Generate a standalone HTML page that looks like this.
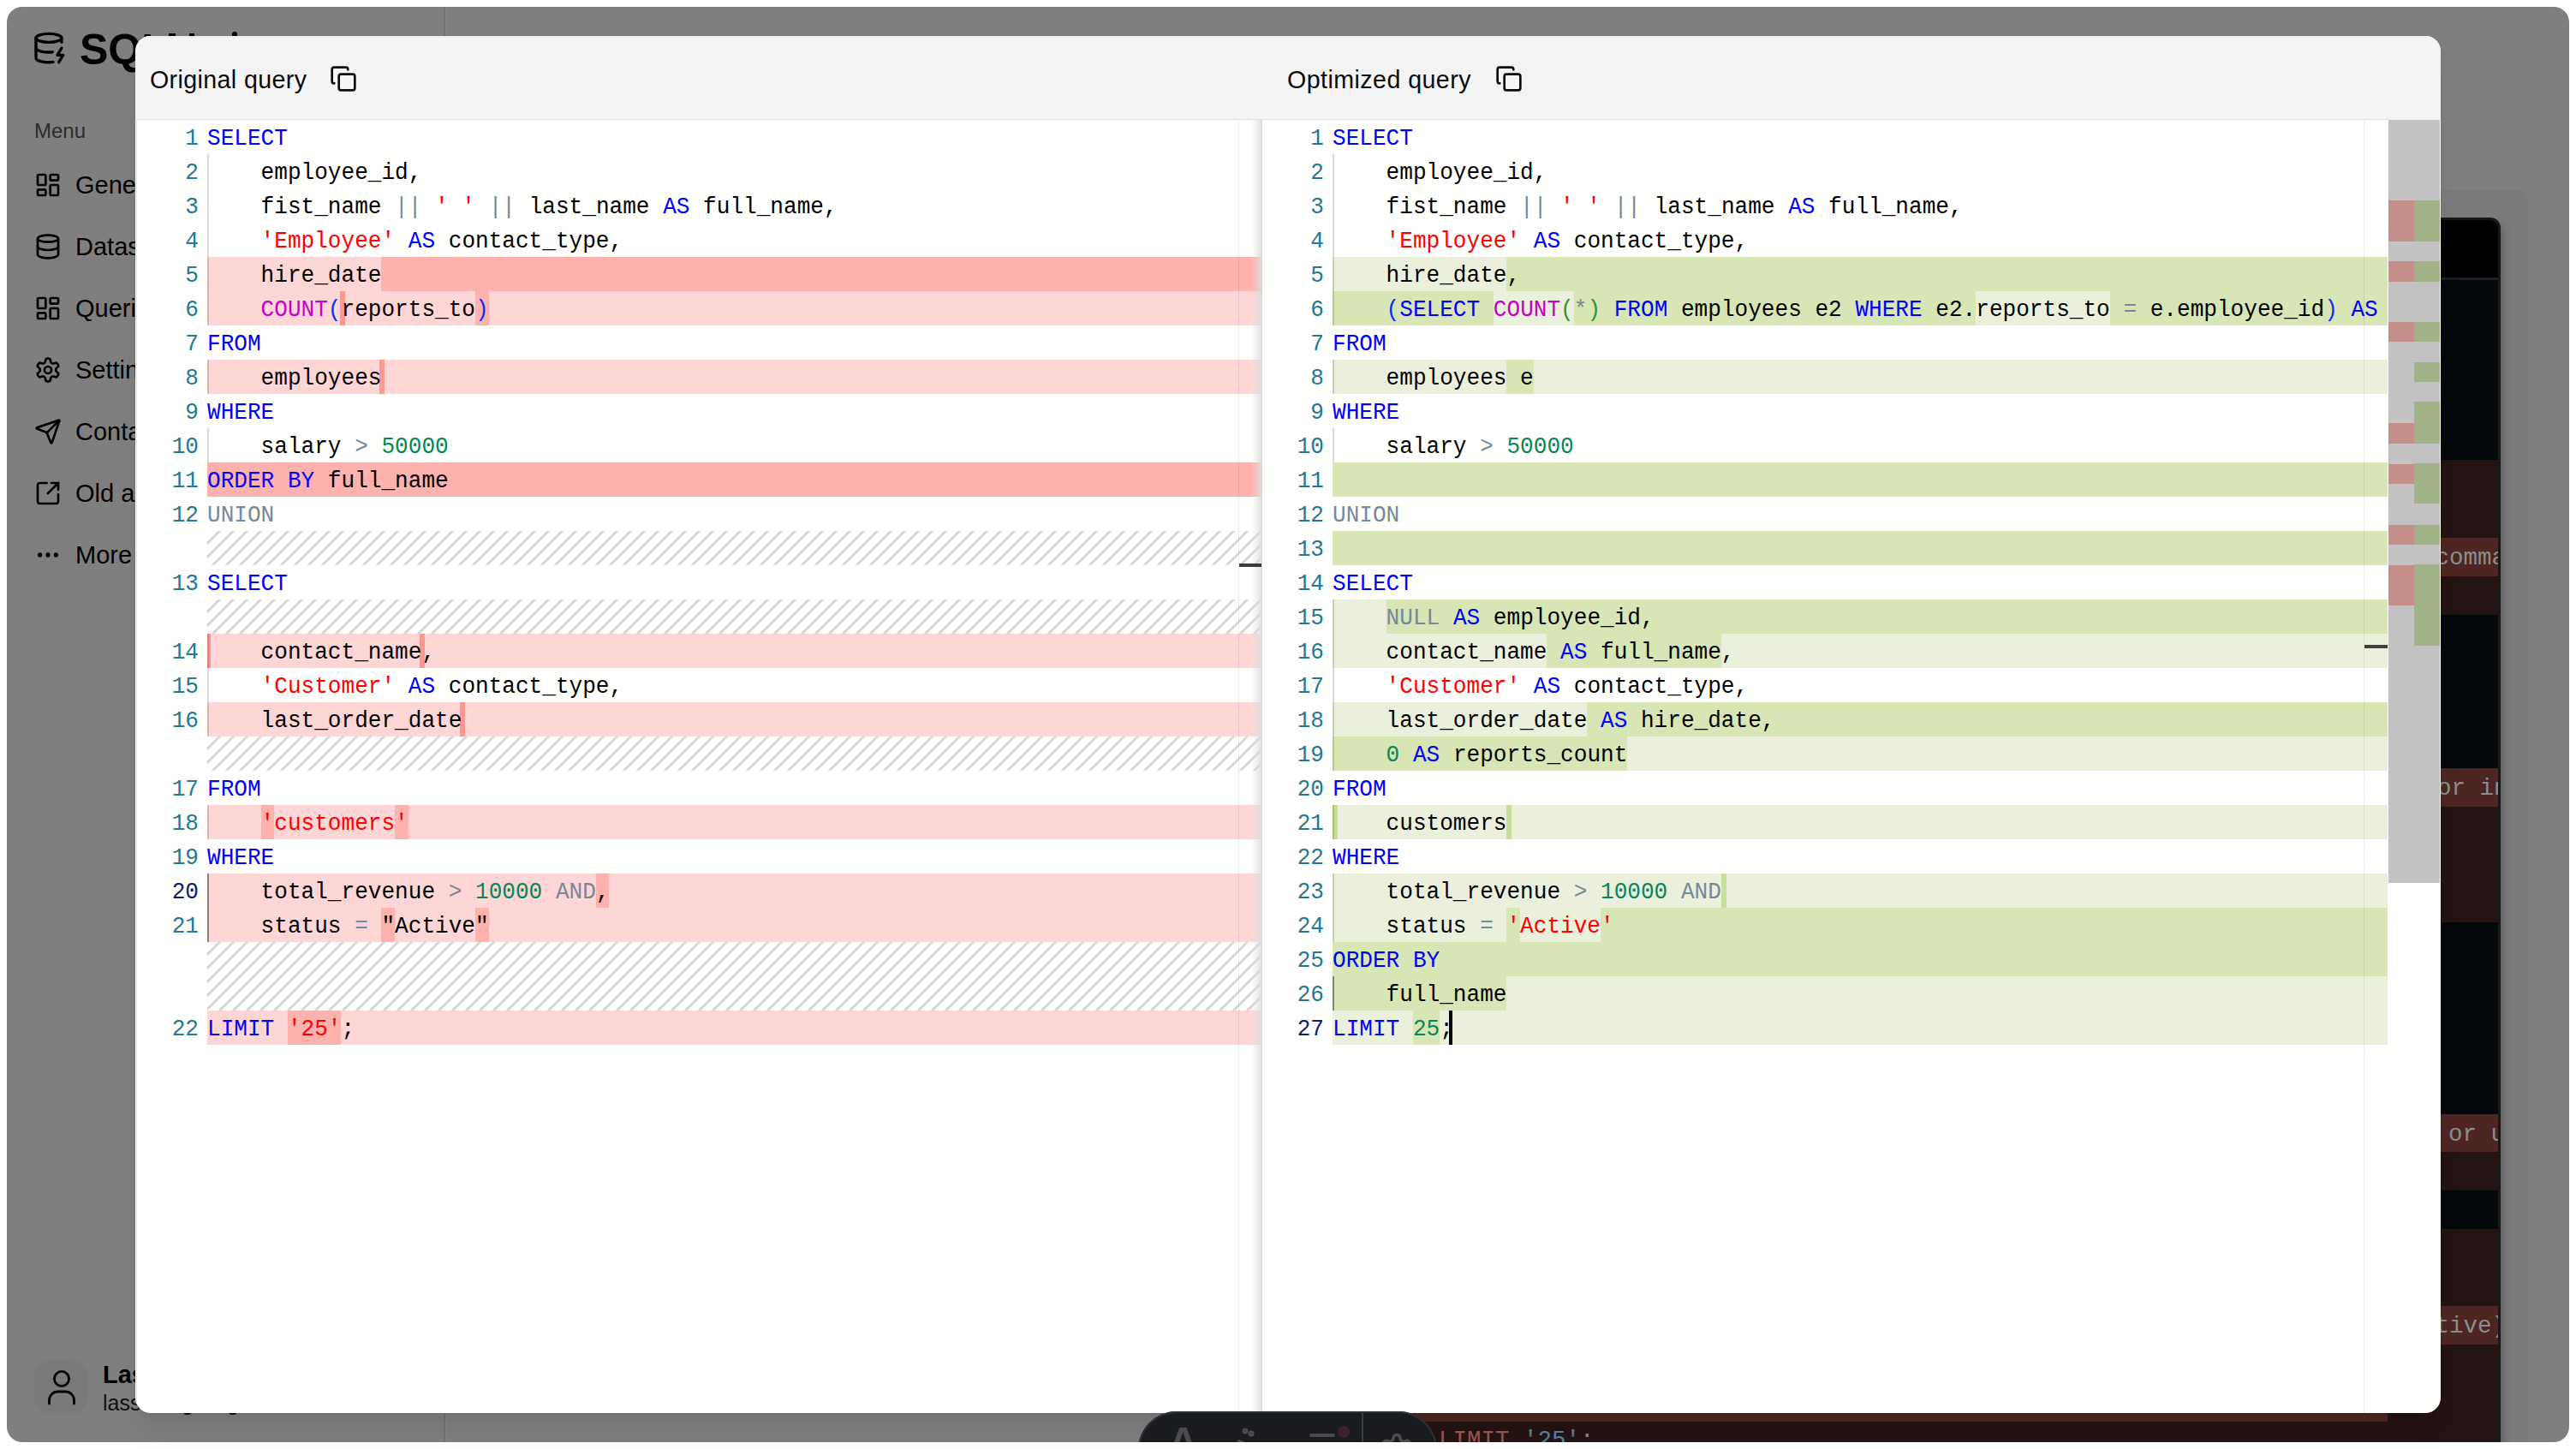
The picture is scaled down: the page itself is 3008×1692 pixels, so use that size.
<!DOCTYPE html>
<html><head><meta charset="utf-8">
<style>
html,body{margin:0;padding:0}
body{width:3008px;height:1692px;position:relative;overflow:hidden;background:#ffffff;font-family:"Liberation Sans",sans-serif}
.abs{position:absolute}
#win{position:absolute;left:8px;top:8px;width:2992px;height:1676px;border-radius:18px;overflow:hidden;background:#7f7f7f}
#modal{position:absolute;left:158px;top:42px;width:2692px;height:1608px;border-radius:18px;overflow:hidden;background:#fffffe;box-shadow:0 0 0 1px rgba(0,0,0,0.03)}
.lbg{position:absolute;height:40px}
.hatch{position:absolute;height:40px;background-image:linear-gradient(-45deg,#d6d6d6 12.5%,transparent 12.5%,transparent 50%,#d6d6d6 50%,#d6d6d6 62.5%,transparent 62.5%,transparent 100%);background-size:16px 16px}
.guide{position:absolute;width:2px;height:40px;background:rgba(0,0,0,0.15)}
.ln{position:absolute;margin-top:2px;transform:scaleY(1.08);transform-origin:0 26.94px;width:80px;height:40px;line-height:40px;text-align:right;font-family:"Liberation Mono",monospace;font-size:26.08px;white-space:pre}
.code{position:absolute;margin-top:2px;transform:scaleY(1.05);transform-origin:0 26.94px;height:40px;line-height:40px;font-family:"Liberation Mono",monospace;font-size:26.08px;white-space:pre;color:#000}
.dk{font-family:"Liberation Mono",monospace;font-size:27.5px;line-height:36px;white-space:pre}
.side{position:absolute;font-size:27px;color:#000;white-space:pre}
</style></head>
<body>
<div id="win">
  <!-- sidebar border -->
  <div class="abs" style="left:510px;top:0;width:2px;height:1676px;background:#727272"></div><div class="abs" style="left:512px;top:0;width:1px;height:1676px;background:#848484"></div>
  <!-- right panel -->
  <div class="abs" style="left:2700px;top:214px;width:244px;height:1500px;border-radius:0 10px 0 0;background:#7b7b7b"></div>
  <!-- dark editor (background) -->
  <div class="abs" style="left:1400px;top:246px;width:1512px;height:1500px;border-radius:12px;background:#16191c;box-shadow:8px 6px 10px -4px rgba(0,0,0,0.22)"></div>
  <div class="abs" style="left:1403px;top:249px;width:1506px;height:1500px;border-radius:10px 10px 0 0;background:#05080b;overflow:hidden">
    <div class="abs" style="left:0;top:0;width:1506px;height:67px;background:#000"></div>
    <div class="abs" style="left:0;top:67px;width:1506px;height:3px;background:#1c1f23"></div>
    <div class="abs" style="left:0px;top:280px;width:1506px;height:91px;background:#231312"></div>
    <div class="abs" style="left:0px;top:371px;width:1506px;height:45px;background:#4d2623"></div>
    <div class="abs" style="left:0px;top:416px;width:1506px;height:45px;background:#231312"></div>
    <div class="abs" style="left:0px;top:640px;width:1506px;height:45px;background:#4d2623"></div>
    <div class="abs" style="left:0px;top:685px;width:1506px;height:135px;background:#231312"></div>
    <div class="abs" style="left:0px;top:1044px;width:1506px;height:44px;background:#4d2623"></div>
    <div class="abs" style="left:0px;top:1088px;width:1506px;height:45px;background:#231312"></div>
    <div class="abs" style="left:0px;top:1178px;width:1506px;height:90px;background:#231312"></div>
    <div class="abs" style="left:0px;top:1268px;width:1506px;height:45px;background:#4d2623"></div>
    <div class="abs" style="left:0px;top:1313px;width:1506px;height:130px;background:#231312"></div>
    <div class="abs" style="left:0px;top:1358px;width:1377px;height:45px;background:#4d2623"></div>
    <div class="abs dk" style="left:1432.5px;top:377px;color:#8a8d8d">comma</div>
    <div class="abs dk" style="left:1435px;top:646px;color:#8a8d8d">or in</div>
    <div class="abs dk" style="left:1431.5px;top:1050px;color:#8a8d8d"> or u</div>
    <div class="abs dk" style="left:1432.5px;top:1274px;color:#8a8d8d">tive)</div>
    <div class="abs dk" style="left:269px;top:1407px;color:#a0524a">LIMIT <span style="color:#5a7fa6">'25'</span><span style="color:#8a8d8d">;</span></div>
  </div>
</div>

<!-- sidebar content (absolute page coords) -->
<svg class="abs" style="left:36.5px;top:35.5px" width="40" height="40" viewBox="0 0 24 24" fill="none" stroke="#000" stroke-width="2" stroke-linecap="round" stroke-linejoin="round"><ellipse cx="12" cy="5" rx="9" ry="3"/><path d="M3 5V19A9 3 0 0 0 15 21.84"/><path d="M21 5V8"/><path d="M21 12L18 17H22L19 22"/><path d="M3 12A9 3 0 0 0 14.59 14.87"/></svg>
<div class="side" style="left:93px;top:30px;font-size:50px;font-weight:bold;line-height:56px">SQL</div>
<div class="abs" style="left:197px;top:39px;width:8px;height:3px;background:#000"></div>
<div class="abs" style="left:221px;top:39px;width:6px;height:3px;background:#000"></div>
<div class="abs" style="left:271px;top:37px;width:6px;height:5px;border-radius:3px 3px 0 0;background:#000"></div>

<div class="side" style="left:40px;top:137.5px;font-size:24px;color:#2b2b2b;line-height:30px">Menu</div>

<svg class="abs" style="left:40px;top:200px" width="32" height="32" viewBox="0 0 24 24" fill="none" stroke="#000" stroke-width="2" stroke-linecap="round" stroke-linejoin="round"><rect width="7" height="9" x="3" y="3" rx="1"/><rect width="7" height="5" x="14" y="3" rx="1"/><rect width="7" height="9" x="14" y="12" rx="1"/><rect width="7" height="5" x="3" y="16" rx="1"/></svg>
<div class="side" style="left:88px;top:197.75px;font-size:29px;line-height:36px">General</div>
<svg class="abs" style="left:40px;top:272px" width="32" height="32" viewBox="0 0 24 24" fill="none" stroke="#000" stroke-width="2" stroke-linecap="round" stroke-linejoin="round"><ellipse cx="12" cy="5" rx="9" ry="3"/><path d="M3 5V19A9 3 0 0 0 21 19V5"/><path d="M3 12A9 3 0 0 0 21 12"/></svg>
<div class="side" style="left:88px;top:269.75px;font-size:29px;line-height:36px">Datasets</div>
<svg class="abs" style="left:40px;top:344px" width="32" height="32" viewBox="0 0 24 24" fill="none" stroke="#000" stroke-width="2" stroke-linecap="round" stroke-linejoin="round"><rect width="7" height="9" x="3" y="3" rx="1"/><rect width="7" height="5" x="14" y="3" rx="1"/><rect width="7" height="9" x="14" y="12" rx="1"/><rect width="7" height="5" x="3" y="16" rx="1"/></svg>
<div class="side" style="left:88px;top:341.75px;font-size:29px;line-height:36px">Queries</div>
<svg class="abs" style="left:40px;top:416px" width="32" height="32" viewBox="0 0 24 24" fill="none" stroke="#000" stroke-width="2" stroke-linecap="round" stroke-linejoin="round"><path d="M12.22 2h-.44a2 2 0 0 0-2 2v.18a2 2 0 0 1-1 1.73l-.43.25a2 2 0 0 1-2 0l-.15-.08a2 2 0 0 0-2.73.73l-.22.38a2 2 0 0 0 .73 2.73l.15.1a2 2 0 0 1 1 1.72v.51a2 2 0 0 1-1 1.74l-.15.09a2 2 0 0 0-.73 2.73l.22.38a2 2 0 0 0 2.73.73l.15-.08a2 2 0 0 1 2 0l.43.25a2 2 0 0 1 1 1.73V20a2 2 0 0 0 2 2h.44a2 2 0 0 0 2-2v-.18a2 2 0 0 1 1-1.73l.43-.25a2 2 0 0 1 2 0l.15.08a2 2 0 0 0 2.73-.73l.22-.39a2 2 0 0 0-.73-2.73l-.15-.08a2 2 0 0 1-1-1.74v-.5a2 2 0 0 1 1-1.74l.15-.09a2 2 0 0 0 .73-2.73l-.22-.38a2 2 0 0 0-2.73-.73l-.15.08a2 2 0 0 1-2 0l-.43-.25a2 2 0 0 1-1-1.73V4a2 2 0 0 0-2-2z"/><circle cx="12" cy="12" r="3"/></svg>
<div class="side" style="left:88px;top:413.75px;font-size:29px;line-height:36px">Settings</div>
<svg class="abs" style="left:40px;top:488px" width="32" height="32" viewBox="0 0 24 24" fill="none" stroke="#000" stroke-width="2" stroke-linecap="round" stroke-linejoin="round"><path d="M14.536 21.686a.5.5 0 0 0 .937-.024l6.5-19a.496.496 0 0 0-.635-.635l-19 6.5a.5.5 0 0 0-.024.937l7.93 3.18a2 2 0 0 1 1.112 1.11z"/><path d="m21.854 2.147-10.94 10.939"/></svg>
<div class="side" style="left:88px;top:485.75px;font-size:29px;line-height:36px">Contact</div>
<svg class="abs" style="left:40px;top:560px" width="32" height="32" viewBox="0 0 24 24" fill="none" stroke="#000" stroke-width="2" stroke-linecap="round" stroke-linejoin="round"><path d="M21 13v6a2 2 0 0 1-2 2H5a2 2 0 0 1-2-2V5a2 2 0 0 1 2-2h6"/><path d="m21 3-9 9"/><path d="M15 3h6v6"/></svg>
<div class="side" style="left:88px;top:557.75px;font-size:29px;line-height:36px">Old app</div>
<svg class="abs" style="left:40px;top:632px" width="32" height="32" viewBox="0 0 24 24" fill="none" stroke="#000" stroke-width="2" stroke-linecap="round" stroke-linejoin="round"><circle cx="12" cy="12" r="1"/><circle cx="19" cy="12" r="1"/><circle cx="5" cy="12" r="1"/></svg>
<div class="side" style="left:88px;top:629.75px;font-size:29px;line-height:36px">More</div>
<div class="abs" style="left:40px;top:1588px;width:63px;height:63px;border-radius:20px;background:#7a7a7a"></div>
<svg class="abs" style="left:40px;top:1588px" width="64" height="64" viewBox="0 0 64 64" fill="none" stroke="#000" stroke-width="2.8" stroke-linecap="round"><circle cx="32" cy="22" r="8.6"/><path d="M17.5 51V47a10 10 0 0 1 10-10h9a10 10 0 0 1 10 10V51"/></svg>
<div class="side" style="left:120px;top:1587.2px;font-size:29px;font-weight:bold;line-height:36px">Lasse</div>
<div class="side" style="left:120px;top:1622px;font-size:25px;line-height:32px;color:#111">lasse</div><div class="side" style="left:212px;top:1622px;font-size:25px;line-height:32px;color:#111">g</div><div class="side" style="left:265px;top:1622px;font-size:25px;line-height:32px;color:#111">g</div>

<!-- modal shadow -->
<div class="abs" style="left:158px;top:42px;width:2692px;height:1608px;border-radius:18px;box-shadow:0 24px 34px -8px rgba(0,0,0,0.09),0 8px 12px -8px rgba(0,0,0,0.08)"></div>
<!-- modal -->
<div id="modal">
 <div class="abs" style="left:-158px;top:-42px;width:3008px;height:1692px">
  <div class="abs" style="left:158px;top:42px;width:2692px;height:98px;background:#f4f4f5"></div>
  <div class="abs" style="left:158px;top:42px;width:2692px;height:2px;background:#ededed"></div>
<div class="abs" style="left:175px;top:74.5px;font-size:28.6px;letter-spacing:0.38px;line-height:36px;white-space:pre;color:#0a0a0a">Original query</div>
<div class="abs" style="left:385px;top:76px;width:32px;height:32px"><svg width="32" height="32" viewBox="0 0 24 24" fill="none" stroke="#0a0a0a" stroke-width="2" stroke-linecap="round" stroke-linejoin="round"><rect width="14" height="14" x="8" y="8" rx="2" ry="2"/><path d="M4 16c-1.1 0-2-.9-2-2V4c0-1.1.9-2 2-2h10c1.1 0 2 .9 2 2"/></svg></div>
<div class="abs" style="left:1503px;top:74.5px;font-size:28.6px;letter-spacing:0.45px;line-height:36px;white-space:pre;color:#0a0a0a">Optimized query</div>
<div class="abs" style="left:1746px;top:76px;width:32px;height:32px"><svg width="32" height="32" viewBox="0 0 24 24" fill="none" stroke="#0a0a0a" stroke-width="2" stroke-linecap="round" stroke-linejoin="round"><rect width="14" height="14" x="8" y="8" rx="2" ry="2"/><path d="M4 16c-1.1 0-2-.9-2-2V4c0-1.1.9-2 2-2h10c1.1 0 2 .9 2 2"/></svg></div>

<!-- editor borders -->
<div class="abs" style="left:159px;top:139px;width:2630px;height:1px;background:#d5e5f5"></div>
<div class="abs" style="left:159px;top:139px;width:1px;height:1510px;background:#d5e5f5"></div>
<div class="abs" style="left:1473px;top:140px;width:1px;height:1510px;background:#c9dcf3"></div>

<!-- left editor -->
<div class="abs" style="left:160px;top:140px;width:1313px;height:1510px;overflow:hidden">
 <div class="abs" style="left:-160px;top:-140px;width:1474px;height:1700px">
<div class="ln" style="left:152px;top:140px;color:#237893">1</div>
<div class="code" style="left:242px;top:140px"><span style="color:#0000ff">SELECT</span></div>
<div class="guide" style="left:242px;top:180px"></div>
<div class="ln" style="left:152px;top:180px;color:#237893">2</div>
<div class="code" style="left:242px;top:180px">    employee_id,</div>
<div class="guide" style="left:242px;top:220px"></div>
<div class="ln" style="left:152px;top:220px;color:#237893">3</div>
<div class="code" style="left:242px;top:220px">    fist_name <span style="color:#778899">||</span> <span style="color:#ff0000">&#x27; &#x27;</span> <span style="color:#778899">||</span> last_name <span style="color:#0000ff">AS</span> full_name,</div>
<div class="guide" style="left:242px;top:260px"></div>
<div class="ln" style="left:152px;top:260px;color:#237893">4</div>
<div class="code" style="left:242px;top:260px">    <span style="color:#ff0000">&#x27;Employee&#x27;</span> <span style="color:#0000ff">AS</span> contact_type,</div>
<div class="lbg" style="left:242px;top:300px;width:1232px;background:#fdd6d5"></div>
<div class="lbg" style="left:445.44px;top:300px;width:1028.56px;background:#fdb2ae"></div>
<div class="guide" style="left:242px;top:300px"></div>
<div class="ln" style="left:152px;top:300px;color:#237893">5</div>
<div class="code" style="left:242px;top:300px">    hire_date</div>
<div class="lbg" style="left:242px;top:340px;width:1232px;background:#fdd6d5"></div>
<div class="lbg" style="left:396.50px;top:340px;width:6.00px;background:#fd978f"></div>
<div class="lbg" style="left:554.99px;top:340px;width:15.65px;background:#fdb2ae"></div>
<div class="guide" style="left:242px;top:340px"></div>
<div class="ln" style="left:152px;top:340px;color:#237893">6</div>
<div class="code" style="left:242px;top:340px">    <span style="color:#c700c7">COUNT</span><span style="color:#0431fa">(</span>reports_to<span style="color:#0431fa">)</span></div>
<div class="ln" style="left:152px;top:380px;color:#237893">7</div>
<div class="code" style="left:242px;top:380px"><span style="color:#0000ff">FROM</span></div>
<div class="lbg" style="left:242px;top:420px;width:1232px;background:#fdd6d5"></div>
<div class="lbg" style="left:443.44px;top:420px;width:6.00px;background:#fd978f"></div>
<div class="guide" style="left:242px;top:420px"></div>
<div class="ln" style="left:152px;top:420px;color:#237893">8</div>
<div class="code" style="left:242px;top:420px">    employees</div>
<div class="ln" style="left:152px;top:460px;color:#237893">9</div>
<div class="code" style="left:242px;top:460px"><span style="color:#0000ff">WHERE</span></div>
<div class="guide" style="left:242px;top:500px"></div>
<div class="ln" style="left:152px;top:500px;color:#237893">10</div>
<div class="code" style="left:242px;top:500px">    salary <span style="color:#778899">&gt;</span> <span style="color:#098658">50000</span></div>
<div class="lbg" style="left:242px;top:540px;width:1232px;background:#fdd6d5"></div>
<div class="lbg" style="left:242.00px;top:540px;width:1232.00px;background:#fdb2ae"></div>
<div class="ln" style="left:152px;top:540px;color:#237893">11</div>
<div class="code" style="left:242px;top:540px"><span style="color:#0000ff">ORDER</span> <span style="color:#0000ff">BY</span> full_name</div>
<div class="ln" style="left:152px;top:580px;color:#237893">12</div>
<div class="code" style="left:242px;top:580px"><span style="color:#778899">UNION</span></div>
<div class="hatch" style="left:242px;top:620px;width:1232px;height:40px"></div>
<div class="ln" style="left:152px;top:660px;color:#237893">13</div>
<div class="code" style="left:242px;top:660px"><span style="color:#0000ff">SELECT</span></div>
<div class="hatch" style="left:242px;top:700px;width:1232px;height:40px"></div>
<div class="lbg" style="left:242px;top:740px;width:1232px;background:#fdd6d5"></div>
<div class="lbg" style="left:242.00px;top:740px;width:4.00px;background:#fd978f"></div>
<div class="lbg" style="left:490.39px;top:740px;width:6.00px;background:#fd978f"></div>
<div class="guide" style="left:242px;top:740px"></div>
<div class="ln" style="left:152px;top:740px;color:#237893">14</div>
<div class="code" style="left:242px;top:740px">    contact_name,</div>
<div class="guide" style="left:242px;top:780px"></div>
<div class="ln" style="left:152px;top:780px;color:#237893">15</div>
<div class="code" style="left:242px;top:780px">    <span style="color:#ff0000">&#x27;Customer&#x27;</span> <span style="color:#0000ff">AS</span> contact_type,</div>
<div class="lbg" style="left:242px;top:820px;width:1232px;background:#fdd6d5"></div>
<div class="lbg" style="left:537.34px;top:820px;width:6.00px;background:#fd978f"></div>
<div class="guide" style="left:242px;top:820px"></div>
<div class="ln" style="left:152px;top:820px;color:#237893">16</div>
<div class="code" style="left:242px;top:820px">    last_order_date</div>
<div class="hatch" style="left:242px;top:860px;width:1232px;height:40px"></div>
<div class="ln" style="left:152px;top:900px;color:#237893">17</div>
<div class="code" style="left:242px;top:900px"><span style="color:#0000ff">FROM</span></div>
<div class="lbg" style="left:242px;top:940px;width:1232px;background:#fdd6d5"></div>
<div class="lbg" style="left:304.60px;top:940px;width:15.65px;background:#fdb2ae"></div>
<div class="lbg" style="left:461.09px;top:940px;width:15.65px;background:#fdb2ae"></div>
<div class="guide" style="left:242px;top:940px"></div>
<div class="ln" style="left:152px;top:940px;color:#237893">18</div>
<div class="code" style="left:242px;top:940px">    <span style="color:#ff0000">&#x27;customers&#x27;</span></div>
<div class="ln" style="left:152px;top:980px;color:#237893">19</div>
<div class="code" style="left:242px;top:980px"><span style="color:#0000ff">WHERE</span></div>
<div class="lbg" style="left:242px;top:1020px;width:1232px;background:#fdd6d5"></div>
<div class="lbg" style="left:695.84px;top:1020px;width:15.65px;background:#fdb2ae"></div>
<div class="guide" style="left:242px;top:1020px;background:rgba(0,0,0,0.42)"></div>
<div class="ln" style="left:152px;top:1020px;color:#0b216f">20</div>
<div class="code" style="left:242px;top:1020px">    total_revenue <span style="color:#778899">&gt;</span> <span style="color:#098658">10000</span> <span style="color:#778899">AND</span>,</div>
<div class="lbg" style="left:242px;top:1060px;width:1232px;background:#fdd6d5"></div>
<div class="lbg" style="left:445.44px;top:1060px;width:15.65px;background:#fdb2ae"></div>
<div class="lbg" style="left:554.99px;top:1060px;width:15.65px;background:#fdb2ae"></div>
<div class="guide" style="left:242px;top:1060px;background:rgba(0,0,0,0.42)"></div>
<div class="ln" style="left:152px;top:1060px;color:#237893">21</div>
<div class="code" style="left:242px;top:1060px">    status <span style="color:#778899">=</span> &quot;Active&quot;</div>
<div class="hatch" style="left:242px;top:1100px;width:1232px;height:80px"></div>
<div class="lbg" style="left:242px;top:1180px;width:1232px;background:#fdd6d5"></div>
<div class="lbg" style="left:335.90px;top:1180px;width:62.60px;background:#fdb2ae"></div>
<div class="ln" style="left:152px;top:1180px;color:#237893">22</div>
<div class="code" style="left:242px;top:1180px"><span style="color:#0000ff">LIMIT</span> <span style="color:#ff0000">&#x27;25&#x27;</span>;</div>
 </div>
</div>
<div class="abs" style="left:1446px;top:140px;width:1px;height:1510px;background:rgba(0,0,0,0.07)"></div>
<div class="abs" style="left:1461px;top:140px;width:12px;height:1510px;background:linear-gradient(to right,rgba(221,221,221,0),rgba(221,221,221,0.85))"></div>
<div class="abs" style="left:1447px;top:658px;width:26px;height:4px;background:#3c3c3c"></div>

<!-- right editor -->
<div class="abs" style="left:1474px;top:140px;width:1314px;height:1510px;overflow:hidden">
 <div class="abs" style="left:-1474px;top:-140px;width:2788px;height:1700px">
<div class="ln" style="left:1466px;top:140px;color:#237893">1</div>
<div class="code" style="left:1556px;top:140px"><span style="color:#0000ff">SELECT</span></div>
<div class="guide" style="left:1556px;top:180px"></div>
<div class="ln" style="left:1466px;top:180px;color:#237893">2</div>
<div class="code" style="left:1556px;top:180px">    employee_id,</div>
<div class="guide" style="left:1556px;top:220px"></div>
<div class="ln" style="left:1466px;top:220px;color:#237893">3</div>
<div class="code" style="left:1556px;top:220px">    fist_name <span style="color:#778899">||</span> <span style="color:#ff0000">&#x27; &#x27;</span> <span style="color:#778899">||</span> last_name <span style="color:#0000ff">AS</span> full_name,</div>
<div class="guide" style="left:1556px;top:260px"></div>
<div class="ln" style="left:1466px;top:260px;color:#237893">4</div>
<div class="code" style="left:1556px;top:260px">    <span style="color:#ff0000">&#x27;Employee&#x27;</span> <span style="color:#0000ff">AS</span> contact_type,</div>
<div class="lbg" style="left:1556px;top:300px;width:1232px;background:#eaf0dc"></div>
<div class="lbg" style="left:1759.44px;top:300px;width:1028.56px;background:#d8e5b5"></div>
<div class="guide" style="left:1556px;top:300px"></div>
<div class="ln" style="left:1466px;top:300px;color:#237893">5</div>
<div class="code" style="left:1556px;top:300px">    hire_date,</div>
<div class="lbg" style="left:1556px;top:340px;width:1232px;background:#eaf0dc"></div>
<div class="lbg" style="left:1556.00px;top:340px;width:187.80px;background:#d8e5b5"></div>
<div class="lbg" style="left:1837.69px;top:340px;width:469.49px;background:#d8e5b5"></div>
<div class="lbg" style="left:2463.68px;top:340px;width:324.32px;background:#d8e5b5"></div>
<div class="guide" style="left:1556px;top:340px"></div>
<div class="ln" style="left:1466px;top:340px;color:#237893">6</div>
<div class="code" style="left:1556px;top:340px">    <span style="color:#0431fa">(</span><span style="color:#0000ff">SELECT</span> <span style="color:#c700c7">COUNT</span><span style="color:#319331">(</span><span style="color:#778899">*</span><span style="color:#319331">)</span> <span style="color:#0000ff">FROM</span> employees e2 <span style="color:#0000ff">WHERE</span> e2.reports_to <span style="color:#778899">=</span> e.employee_id<span style="color:#0431fa">)</span> <span style="color:#0000ff">AS</span> reports_count,</div>
<div class="ln" style="left:1466px;top:380px;color:#237893">7</div>
<div class="code" style="left:1556px;top:380px"><span style="color:#0000ff">FROM</span></div>
<div class="lbg" style="left:1556px;top:420px;width:1232px;background:#eaf0dc"></div>
<div class="lbg" style="left:1759.44px;top:420px;width:31.30px;background:#d8e5b5"></div>
<div class="guide" style="left:1556px;top:420px"></div>
<div class="ln" style="left:1466px;top:420px;color:#237893">8</div>
<div class="code" style="left:1556px;top:420px">    employees e</div>
<div class="ln" style="left:1466px;top:460px;color:#237893">9</div>
<div class="code" style="left:1556px;top:460px"><span style="color:#0000ff">WHERE</span></div>
<div class="guide" style="left:1556px;top:500px"></div>
<div class="ln" style="left:1466px;top:500px;color:#237893">10</div>
<div class="code" style="left:1556px;top:500px">    salary <span style="color:#778899">&gt;</span> <span style="color:#098658">50000</span></div>
<div class="lbg" style="left:1556px;top:540px;width:1232px;background:#eaf0dc"></div>
<div class="lbg" style="left:1556.00px;top:540px;width:1232.00px;background:#d8e5b5"></div>
<div class="ln" style="left:1466px;top:540px;color:#237893">11</div>
<div class="code" style="left:1556px;top:540px"></div>
<div class="ln" style="left:1466px;top:580px;color:#237893">12</div>
<div class="code" style="left:1556px;top:580px"><span style="color:#778899">UNION</span></div>
<div class="lbg" style="left:1556px;top:620px;width:1232px;background:#eaf0dc"></div>
<div class="lbg" style="left:1556.00px;top:620px;width:1232.00px;background:#d8e5b5"></div>
<div class="ln" style="left:1466px;top:620px;color:#237893">13</div>
<div class="code" style="left:1556px;top:620px"></div>
<div class="ln" style="left:1466px;top:660px;color:#237893">14</div>
<div class="code" style="left:1556px;top:660px"><span style="color:#0000ff">SELECT</span></div>
<div class="lbg" style="left:1556px;top:700px;width:1232px;background:#eaf0dc"></div>
<div class="lbg" style="left:1618.60px;top:700px;width:1169.40px;background:#d8e5b5"></div>
<div class="guide" style="left:1556px;top:700px"></div>
<div class="ln" style="left:1466px;top:700px;color:#237893">15</div>
<div class="code" style="left:1556px;top:700px">    <span style="color:#778899">NULL</span> <span style="color:#0000ff">AS</span> employee_id,</div>
<div class="lbg" style="left:1556px;top:740px;width:1232px;background:#eaf0dc"></div>
<div class="lbg" style="left:1806.39px;top:740px;width:203.44px;background:#d8e5b5"></div>
<div class="guide" style="left:1556px;top:740px"></div>
<div class="ln" style="left:1466px;top:740px;color:#237893">16</div>
<div class="code" style="left:1556px;top:740px">    contact_name <span style="color:#0000ff">AS</span> full_name,</div>
<div class="guide" style="left:1556px;top:780px"></div>
<div class="ln" style="left:1466px;top:780px;color:#237893">17</div>
<div class="code" style="left:1556px;top:780px">    <span style="color:#ff0000">&#x27;Customer&#x27;</span> <span style="color:#0000ff">AS</span> contact_type,</div>
<div class="lbg" style="left:1556px;top:820px;width:1232px;background:#eaf0dc"></div>
<div class="lbg" style="left:1853.34px;top:820px;width:934.66px;background:#d8e5b5"></div>
<div class="guide" style="left:1556px;top:820px"></div>
<div class="ln" style="left:1466px;top:820px;color:#237893">18</div>
<div class="code" style="left:1556px;top:820px">    last_order_date <span style="color:#0000ff">AS</span> hire_date,</div>
<div class="lbg" style="left:1556px;top:860px;width:1232px;background:#eaf0dc"></div>
<div class="lbg" style="left:1556.00px;top:860px;width:344.29px;background:#d8e5b5"></div>
<div class="guide" style="left:1556px;top:860px"></div>
<div class="ln" style="left:1466px;top:860px;color:#237893">19</div>
<div class="code" style="left:1556px;top:860px">    <span style="color:#098658">0</span> <span style="color:#0000ff">AS</span> reports_count</div>
<div class="ln" style="left:1466px;top:900px;color:#237893">20</div>
<div class="code" style="left:1556px;top:900px"><span style="color:#0000ff">FROM</span></div>
<div class="lbg" style="left:1556px;top:940px;width:1232px;background:#eaf0dc"></div>
<div class="lbg" style="left:1556.00px;top:940px;width:5.80px;background:#c7df97"></div>
<div class="lbg" style="left:1759.24px;top:940px;width:6.00px;background:#c7df97"></div>
<div class="guide" style="left:1556px;top:940px"></div>
<div class="ln" style="left:1466px;top:940px;color:#237893">21</div>
<div class="code" style="left:1556px;top:940px">    customers</div>
<div class="ln" style="left:1466px;top:980px;color:#237893">22</div>
<div class="code" style="left:1556px;top:980px"><span style="color:#0000ff">WHERE</span></div>
<div class="lbg" style="left:1556px;top:1020px;width:1232px;background:#eaf0dc"></div>
<div class="lbg" style="left:2009.64px;top:1020px;width:6.00px;background:#c7df97"></div>
<div class="guide" style="left:1556px;top:1020px"></div>
<div class="ln" style="left:1466px;top:1020px;color:#237893">23</div>
<div class="code" style="left:1556px;top:1020px">    total_revenue <span style="color:#778899">&gt;</span> <span style="color:#098658">10000</span> <span style="color:#778899">AND</span></div>
<div class="lbg" style="left:1556px;top:1060px;width:1232px;background:#eaf0dc"></div>
<div class="lbg" style="left:1759.44px;top:1060px;width:15.65px;background:#d8e5b5"></div>
<div class="lbg" style="left:1868.99px;top:1060px;width:919.01px;background:#d8e5b5"></div>
<div class="guide" style="left:1556px;top:1060px"></div>
<div class="ln" style="left:1466px;top:1060px;color:#237893">24</div>
<div class="code" style="left:1556px;top:1060px">    status <span style="color:#778899">=</span> <span style="color:#ff0000">&#x27;Active&#x27;</span></div>
<div class="lbg" style="left:1556px;top:1100px;width:1232px;background:#eaf0dc"></div>
<div class="lbg" style="left:1556.00px;top:1100px;width:1232.00px;background:#d8e5b5"></div>
<div class="ln" style="left:1466px;top:1100px;color:#237893">25</div>
<div class="code" style="left:1556px;top:1100px"><span style="color:#0000ff">ORDER</span> <span style="color:#0000ff">BY</span></div>
<div class="lbg" style="left:1556px;top:1140px;width:1232px;background:#eaf0dc"></div>
<div class="lbg" style="left:1556.00px;top:1140px;width:203.44px;background:#d8e5b5"></div>
<div class="guide" style="left:1556px;top:1140px;background:rgba(0,0,0,0.42)"></div>
<div class="ln" style="left:1466px;top:1140px;color:#237893">26</div>
<div class="code" style="left:1556px;top:1140px">    full_name</div>
<div class="lbg" style="left:1556px;top:1180px;width:1232px;background:#eaf0dc"></div>
<div class="lbg" style="left:1649.90px;top:1180px;width:31.30px;background:#d8e5b5"></div>
<div class="ln" style="left:1466px;top:1180px;color:#0b216f">27</div>
<div class="code" style="left:1556px;top:1180px"><span style="color:#0000ff">LIMIT</span> <span style="color:#098658">25</span>;</div>
 </div>
</div>
<div class="abs" style="left:2760px;top:140px;width:1px;height:1510px;background:rgba(0,0,0,0.07)"></div>
<div class="abs" style="left:1692px;top:1180px;width:4px;height:40px;background:#000"></div>
<div class="abs" style="left:2761px;top:753px;width:27px;height:4px;background:#404040"></div>

<!-- overview ruler -->
<div class="abs" style="left:2789px;top:140px;width:60px;height:891px;background:#c2c2c2"></div>
<div style="position:absolute;left:2789px;top:234px;width:30px;height:48px;background:#c48f8a"></div>
<div style="position:absolute;left:2819px;top:234px;width:30px;height:48px;background:#a2b287"></div>
<div style="position:absolute;left:2789px;top:305px;width:30px;height:24px;background:#c48f8a"></div>
<div style="position:absolute;left:2819px;top:305px;width:30px;height:24px;background:#a2b287"></div>
<div style="position:absolute;left:2789px;top:376px;width:30px;height:23px;background:#c48f8a"></div>
<div style="position:absolute;left:2819px;top:376px;width:30px;height:23px;background:#a2b287"></div>
<div style="position:absolute;left:2819px;top:423px;width:30px;height:23px;background:#a2b287"></div>
<div style="position:absolute;left:2819px;top:469px;width:30px;height:49px;background:#a2b287"></div>
<div style="position:absolute;left:2789px;top:494px;width:30px;height:24px;background:#c48f8a"></div>
<div style="position:absolute;left:2789px;top:542px;width:30px;height:23px;background:#c48f8a"></div>
<div style="position:absolute;left:2819px;top:541px;width:30px;height:47px;background:#a2b287"></div>
<div style="position:absolute;left:2789px;top:613px;width:30px;height:23px;background:#c48f8a"></div>
<div style="position:absolute;left:2819px;top:613px;width:30px;height:23px;background:#a2b287"></div>
<div style="position:absolute;left:2789px;top:660px;width:30px;height:47px;background:#c48f8a"></div>
<div style="position:absolute;left:2819px;top:659px;width:30px;height:95px;background:#a2b287"></div>
 </div>
</div>

<!-- bottom toolbar -->
<div class="abs" style="left:1329px;top:1648px;width:349px;height:36px;overflow:hidden">
 <div class="abs" style="left:0;top:0;width:349px;height:90px;border-radius:48px;background:#1a1b1f;box-shadow:inset 0 0 0 2px #2c3038"></div>
 <div class="abs" style="left:261px;top:2px;width:2px;height:34px;background:#3a3d44"></div>
 <div class="abs" style="left:35px;top:12px;font-size:48px;font-weight:bold;color:#4b4c50;line-height:48px">A</div>
 <svg class="abs" style="left:100px;top:14px" width="60" height="30" viewBox="0 0 60 30" fill="none" stroke="#4b4c50" stroke-width="4" stroke-linecap="round" stroke-linejoin="round"><path d="M13 30 L18 21 L46 33"/><circle cx="25" cy="9" r="1.5"/><circle cx="32" cy="12" r="1.5"/></svg>
 <div class="abs" style="left:200px;top:26px;width:30px;height:4px;border-radius:2px;background:#4b4c50"></div>
 <div class="abs" style="left:233px;top:17px;width:14px;height:14px;border-radius:7px;background:#3d2029"></div>
 <svg class="abs" style="left:281px;top:23.5px" width="42" height="42" viewBox="0 0 24 24" fill="none" stroke="#4b4c50" stroke-width="2" stroke-linecap="round" stroke-linejoin="round"><path d="M12.22 2h-.44a2 2 0 0 0-2 2v.18a2 2 0 0 1-1 1.73l-.43.25a2 2 0 0 1-2 0l-.15-.08a2 2 0 0 0-2.73.73l-.22.38a2 2 0 0 0 .73 2.73l.15.1a2 2 0 0 1 1 1.72v.51a2 2 0 0 1-1 1.74l-.15.09a2 2 0 0 0-.73 2.73l.22.38a2 2 0 0 0 2.73.73l.15-.08a2 2 0 0 1 2 0l.43.25a2 2 0 0 1 1 1.73V20a2 2 0 0 0 2 2h.44a2 2 0 0 0 2-2v-.18a2 2 0 0 1 1-1.73l.43-.25a2 2 0 0 1 2 0l.15.08a2 2 0 0 0 2.73-.73l.22-.39a2 2 0 0 0-.73-2.73l-.15-.08a2 2 0 0 1-1-1.74v-.5a2 2 0 0 1 1-1.74l.15-.09a2 2 0 0 0 .73-2.73l-.22-.38a2 2 0 0 0-2.73-.73l-.15.08a2 2 0 0 1-2 0l-.43-.25a2 2 0 0 1-1-1.73V4a2 2 0 0 0-2-2z"/><circle cx="12" cy="12" r="3"/></svg>
</div>
</body></html>
